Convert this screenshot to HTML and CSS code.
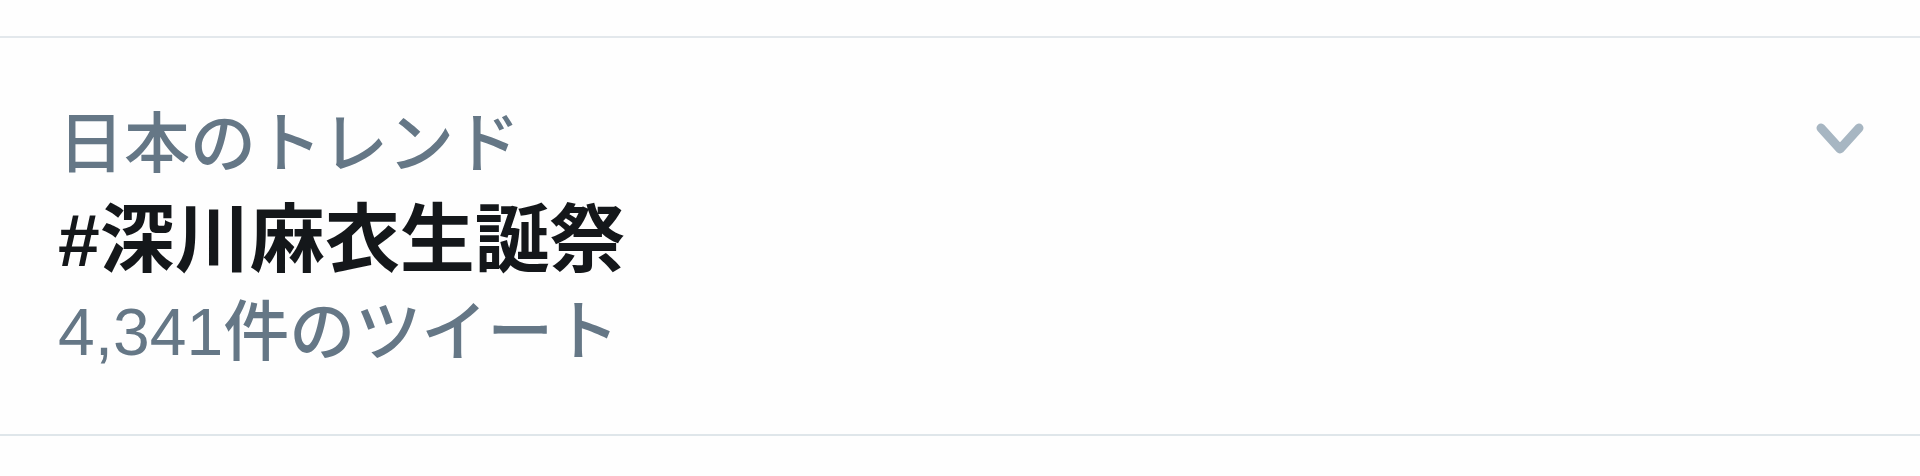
FILE: index.html
```html
<!DOCTYPE html>
<html lang="ja">
<head>
<meta charset="utf-8">
<title>日本のトレンド</title>
<link rel="stylesheet" href="styles.css">
</head>
<body>
<div class="spacer"></div>
<section class="trend">
  <div class="trend-body">
    <div class="trend-context">日本のトレンド</div>
    <div class="trend-name">#深川麻衣生誕祭</div>
    <div class="trend-count">4,341件のツイート</div>
  </div>
  <div class="trend-caret">
    <svg width="50" height="38" viewBox="0 0 50 38"><path d="M6 6 L25 27 L44 6" fill="none" stroke="#a7b6c2" stroke-width="9" stroke-linecap="round" stroke-linejoin="round"/></svg>
  </div>
</section>
</body>
</html>
```
FILE: styles.css
```css
html, body {
  margin: 0;
  padding: 0;
  background: #fefefe;
}
body {
  font-family: "Liberation Sans", "Noto Sans CJK JP", sans-serif;
  width: 1920px;
  height: 476px;
  overflow: hidden;
}
.spacer {
  height: 36px;
}
.trend {
  height: 396px;
  border-top: 2px solid #e3e8ec;
  border-bottom: 2px solid #dfe6ea;
  display: flex;
  justify-content: space-between;
  padding: 0 55px 0 58px;
}
.trend-body {
  display: flex;
  flex-direction: column;
  padding-top: 57px;
}
.trend-context {
  font-size: 66px;
  line-height: 99px;
  font-weight: 500;
  color: #657786;
}
.trend-name {
  font-size: 75px;
  line-height: 92px;
  font-weight: 700;
  color: #14171a;
}
.trend-count {
  font-size: 66px;
  line-height: 92px;
  font-weight: 500;
  color: #657786;
}
.trend-caret {
  padding-top: 84px;
}
```
